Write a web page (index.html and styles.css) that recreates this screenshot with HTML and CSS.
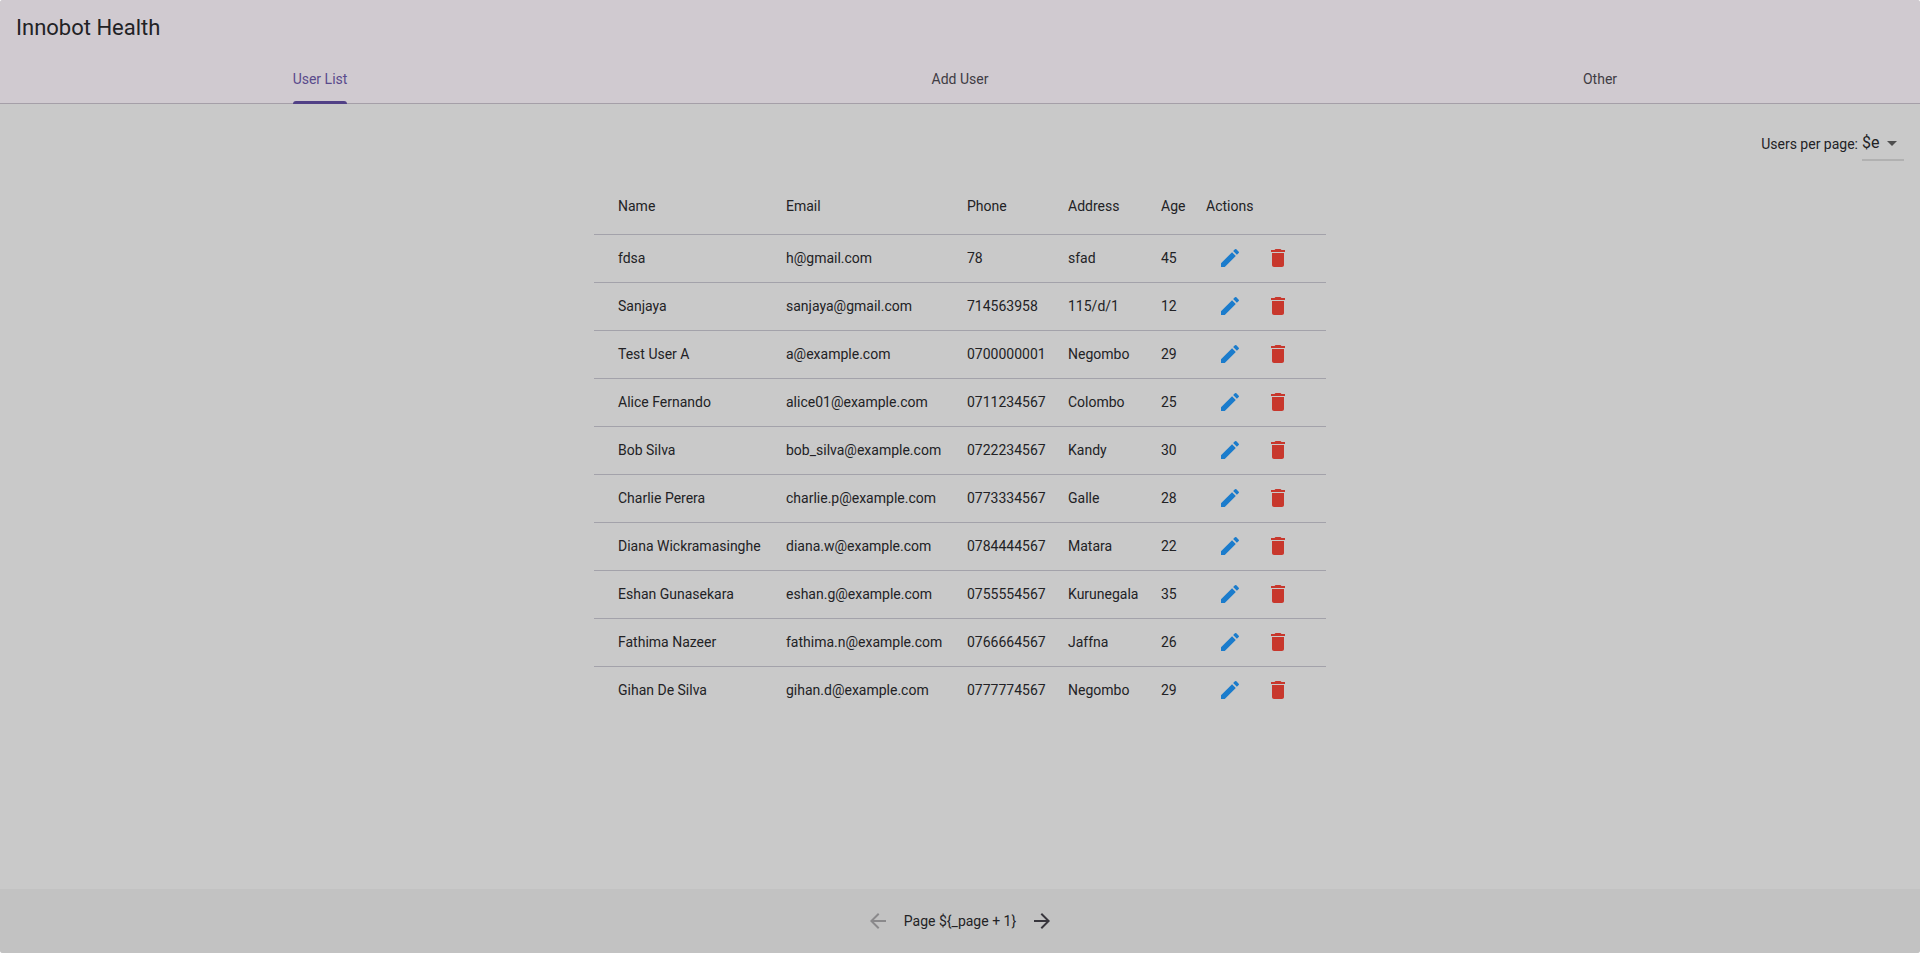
FILE: index.html
```
<!DOCTYPE html>
<html lang="en">
<head>
<meta charset="utf-8">
<title>Innobot Health</title>
<link rel="stylesheet" href="styles.css">
</head>
<body>
<svg class="sprite" aria-hidden="true">
  <symbol id="edit" viewBox="0 0 24 24"><path d="M3 17.250V21h3.750L17.810 9.940l-3.750-3.750L3 17.250zM20.710 7.040a1 1 0 0 0 0-1.410l-2.340-2.340a1 1 0 0 0-1.410 0l-1.830 1.830 3.750 3.750 1.830-1.830z"/></symbol>
  <symbol id="trash" viewBox="0 0 24 24"><path d="M6 19c0 1.100.9 2 2 2h8c1.100 0 2-.9 2-2V7H6v12zM19 4h-3.500l-1-1h-5l-1 1H5v2h14V4z"/></symbol>
  <symbol id="back" viewBox="0 0 24 24"><path d="M20 11H7.830l5.590-5.590L12 4l-8 8 8 8 1.410-1.410L7.830 13H20v-2z"/></symbol>
  <symbol id="forward" viewBox="0 0 24 24"><path d="M12 4l-1.410 1.410L16.170 11H4v2h12.170l-5.580 5.590L12 20l8-8z"/></symbol>
  <symbol id="drop" viewBox="0 0 24 24"><path d="M7 10l5 5 5-5z"/></symbol>
</svg>
<div class="app">
  <header class="app-bar">
    <h1 class="title">Innobot Health</h1>
    <nav class="tabs">
      <a class="tab" href="#users" aria-current="page"><span class="tab-label tab-label-active">User List</span></a>
      <a class="tab" href="#add"><span class="tab-label">Add User</span></a>
      <a class="tab" href="#other"><span class="tab-label">Other</span></a>
    </nav>
  </header>
  <main class="content">
    <div class="page-size">
      <label for="per-page">Users per page:</label>
      <div class="select-box">
        <select id="per-page" class="select"><option>$e</option></select>
        <svg class="icon select-arrow" aria-hidden="true"><use href="#drop"/></svg>
      </div>
    </div>
    <table class="users">
      <colgroup><col class="col-name"><col class="col-email"><col class="col-phone"><col class="col-address"><col class="col-age"><col class="col-actions"></colgroup>
      <thead>
        <tr><th>Name</th><th>Email</th><th>Phone</th><th>Address</th><th>Age</th><th>Actions</th></tr>
      </thead>
      <tbody id="rows"></tbody>
    </table>
  </main>
  <footer class="pager">
    <button class="icon-button" type="button" disabled aria-label="Previous page"><svg class="icon"><use href="#back"/></svg></button>
    <span>Page ${_page + 1}</span>
    <button class="icon-button" type="button" aria-label="Next page"><svg class="icon"><use href="#forward"/></svg></button>
  </footer>
</div>
<script src="users.js"></script>
</body>
</html>
```
FILE: styles.css
```
* { box-sizing: border-box; }

body {
  margin: 0;
  background: #fff;
  color: #222225;
  font: 14px/20px Roboto, sans-serif;
}

.sprite { display: none; }

.icon {
  display: block;
  width: 24px;
  height: 24px;
  fill: currentColor;
}

.app {
  display: flex;
  flex-direction: column;
  min-height: 100vh;
  overflow: hidden;
  border-radius: 3px;
  background: #c9c9c9;
}

.app-bar {
  background: #d0cad0;
  border-bottom: 1px solid #a59fa8;
}

.title {
  margin: 0;
  padding: 14px 16px;
  font-size: 22px;
  font-weight: 400;
  line-height: 28px;
}

.tabs { display: flex; }

.tab {
  display: flex;
  flex: 1;
  justify-content: center;
  color: #3f3c44;
  text-decoration: none;
}

.tab-label {
  padding: 13px 0 12px;
  border-bottom: 3px solid transparent;
  margin-bottom: -1px;
}

.tab-label-active {
  position: relative;
  color: #5a4a8c;
}

.tab-label-active::after {
  content: "";
  position: absolute;
  right: 0;
  bottom: -3px;
  left: 0;
  height: 3px;
  border-radius: 3px 3px 0 0;
  background: #514086;
}

.content {
  flex: 1;
  padding: 16px;
}

.page-size {
  display: flex;
  justify-content: flex-end;
  align-items: center;
  gap: 4px;
  height: 48px;
}

.select-box {
  position: relative;
  border-bottom: 2px solid #b1b1b1;
  padding: 4px 0;
}

.select {
  display: block;
  width: 42px;
  height: 24px;
  padding: 0;
  border: 0;
  appearance: none;
  background: transparent;
  color: inherit;
  font: 16px/24px Roboto, sans-serif;
}

.select-arrow {
  position: absolute;
  top: 4px;
  right: 0;
  color: #4f4f4f;
  pointer-events: none;
}

.users {
  width: 732px;
  max-width: 100%;
  margin: 10px auto 0;
  border-collapse: separate;
  border-spacing: 0;
  table-layout: fixed;
}

.col-name { width: 182px; }
.col-email { width: 181px; }
.col-phone { width: 101px; }
.col-address { width: 93px; }
.col-age { width: 45px; }
.col-actions { width: 130px; }

.users th,
.users td {
  height: 48px;
  padding: 0 0 2px 10px;
  border-top: 1px solid #a3a2aa;
  font-weight: 400;
  text-align: left;
  white-space: nowrap;
}

.users th {
  height: 56px;
  padding-bottom: 0;
  border-top: 0;
}

.users th:first-child,
.users td:first-child { padding-left: 24px; }

.actions { display: flex; }

.icon-button {
  display: grid;
  place-items: center;
  width: 48px;
  height: 40px;
  padding: 0;
  border: 0;
  background: transparent;
  color: #38363d;
}

.icon-button:disabled { color: #8a898b; }

.icon-button.edit { color: #1b7ccc; }

.icon-button.delete { color: #c8372c; }

.pager {
  display: flex;
  justify-content: center;
  align-items: center;
  gap: 2px;
  padding: 12px;
  background: #c2c2c2;
}
```
FILE: users.js
```
const users = [
  ["fdsa", "h@gmail.com", "78", "sfad", "45"],
  ["Sanjaya", "sanjaya@gmail.com", "714563958", "115/d/1", "12"],
  ["Test User A", "a@example.com", "0700000001", "Negombo", "29"],
  ["Alice Fernando", "alice01@example.com", "0711234567", "Colombo", "25"],
  ["Bob Silva", "bob_silva@example.com", "0722234567", "Kandy", "30"],
  ["Charlie Perera", "charlie.p@example.com", "0773334567", "Galle", "28"],
  ["Diana Wickramasinghe", "diana.w@example.com", "0784444567", "Matara", "22"],
  ["Eshan Gunasekara", "eshan.g@example.com", "0755554567", "Kurunegala", "35"],
  ["Fathima Nazeer", "fathima.n@example.com", "0766664567", "Jaffna", "26"],
  ["Gihan De Silva", "gihan.d@example.com", "0777774567", "Negombo", "29"]
];

const button = (kind, label, icon) =>
  `<button class="icon-button ${kind}" type="button" aria-label="${label}"><svg class="icon"><use href="#${icon}"/></svg></button>`;

document.getElementById("rows").innerHTML = users.map(user =>
  `<tr>${user.map(value => `<td>${value}</td>`).join("")}<td><div class="actions">${
    button("edit", `Edit ${user[0]}`, "edit")}${button("delete", `Delete ${user[0]}`, "trash")}</div></td></tr>`
).join("");
```
